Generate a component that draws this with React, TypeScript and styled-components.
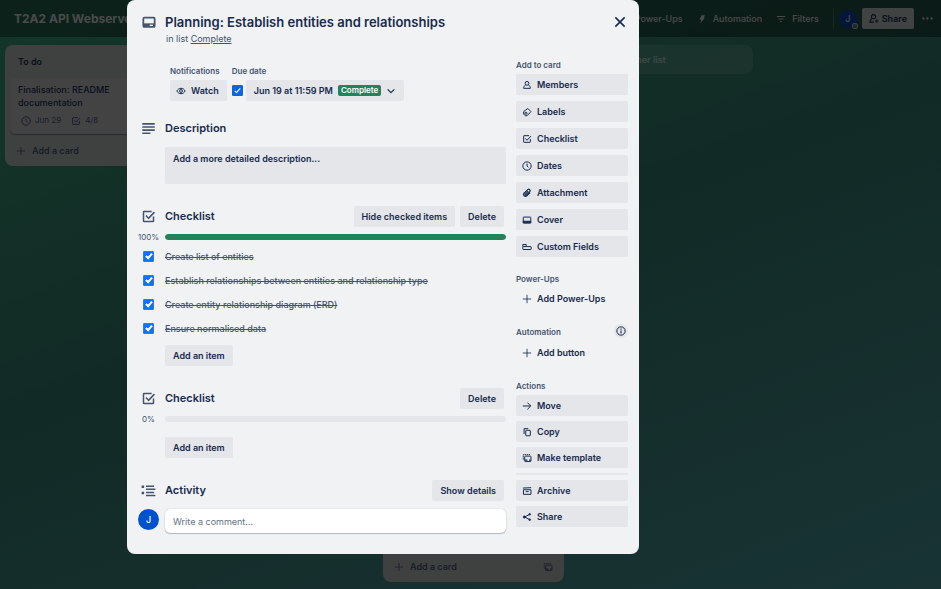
import React, { useState } from "react";
import type { ReactNode } from "react";
import styled, { createGlobalStyle } from "styled-components";

const ink = "#172b4d";
const subtle = "#44546f";
const fill = "#e4e6ea";

const GlobalStyle = createGlobalStyle`
  *, *::before, *::after { box-sizing: border-box; }
  body {
    margin: 0;
    background: #000;
    color: ${ink};
    font-family: Inter, "Liberation Sans", sans-serif;
    font-size: 9px;
    line-height: 13px;
  }
  button, input, textarea { font: inherit; color: inherit; }
  h1, h2, h3, p, ul { margin: 0; padding: 0; }
  ul { list-style: none; }
`;

/* ---------- icons ---------- */

const Svg = styled.svg<{ $size: number }>`
  display: block;
  flex: none;
  width: ${(p) => p.$size}px;
  height: ${(p) => p.$size}px;
  fill: none;
  stroke: currentColor;
  stroke-width: 2.4;
  stroke-linejoin: round;
`;

type IconName =
  | "card" | "lines" | "check" | "activity" | "eye" | "chevron" | "close"
  | "member" | "label" | "clock" | "clip" | "cover" | "fields" | "plus"
  | "info" | "arrow" | "copy" | "template" | "archive" | "share" | "bolt"
  | "filter" | "invite" | "dots";

const shapes: Record<IconName, ReactNode> = {
  card: (
    <>
      <rect x="3.500" y="4" width="17" height="14" rx="1.5" strokeWidth="2.600" />
      <path d="M4 12.500h16V18H4z" fill="currentColor" stroke="none" />
      <path d="M13 15.500h5" stroke="#f1f2f4" strokeWidth="2" />
    </>
  ),
  lines: <path d="M2 4.500h20M2 9.500h20M2 14.500h20M2 19.500h13" strokeWidth="2.600" />,
  check: (
    <>
      <path d="M17 4H5a1 1 0 0 0-1 1v14a1 1 0 0 0 1 1h14a1 1 0 0 0 1-1v-7" />
      <path d="M8 10.500l4 4.500 9.500-10" />
    </>
  ),
  activity: (
    <>
      <path d="M8 5h13M8 10h15M8 15h13M8 20h15" />
      <path d="M1 6h4M1 16h4" strokeWidth="4" />
    </>
  ),
  eye: (
    <>
      <path d="M2 12c2.500-4.500 6-6.500 10-6.500s7.500 2 10 6.500c-2.500 4.500-6 6.500-10 6.500S4.500 16.500 2 12z" />
      <circle cx="12" cy="12" r="3.500" />
    </>
  ),
  chevron: <path d="M4 8l8 8 8-8" strokeWidth="3" />,
  close: <path d="M5 5l14 14M19 5L5 19" strokeWidth="2.400" />,
  member: (
    <>
      <circle cx="12" cy="8" r="4.500" />
      <path d="M8.500 12C5.500 13.500 4 16 4 20h16c0-4-1.500-6.500-4.500-8" />
    </>
  ),
  label: (
    <>
      <path d="M4 11v6l4 4h4l9.500-10L14 3.500z" />
      <circle cx="9.500" cy="15" r="2.500" />
    </>
  ),
  clock: (
    <>
      <circle cx="12" cy="12" r="10" />
      <path d="M12 6v6l3.500 3" />
    </>
  ),
  clip: (
    <path d="M19.500 11l-8 8a4.500 4.500 0 0 1-6.400-6.400l8.600-8.600a3.400 3.400 0 0 1 4.800 4.800l-8.200 8.200a1.700 1.700 0 0 1-2.400-2.400l7-7" strokeWidth="2.800" />
  ),
  cover: (
    <>
      <rect x="3" y="5" width="18" height="14" rx="1" />
      <path d="M3 15h18v4H3z" fill="currentColor" />
    </>
  ),
  fields: (
    <>
      <path d="M2 11V6h8v4" />
      <rect x="2" y="11" width="20" height="7" rx="1" />
    </>
  ),
  plus: <path d="M12 2v20M2 12h20" strokeWidth="2" />,
  info: (
    <>
      <circle cx="12" cy="12" r="10" />
      <path d="M12 11v7M12 6v3" strokeWidth="2.600" />
    </>
  ),
  arrow: <path d="M2 12h19M13 4l8 8-8 8" />,
  copy: (
    <>
      <path d="M5 17V4h10" />
      <rect x="9" y="8" width="11" height="13" rx="1" />
    </>
  ),
  template: (
    <>
      <path d="M3 16V4h16" strokeDasharray="3.500 1.500" />
      <rect x="6.500" y="7.500" width="15" height="13" rx="1.500" />
      <path d="M7 17h6M17 17h4" strokeWidth="3" />
    </>
  ),
  archive: (
    <>
      <path d="M2 5l20-1" />
      <path d="M3.500 9h18v11h-18zM9 13.500h7" />
    </>
  ),
  share: (
    <>
      <path d="M19 5.500L6 12l13 6.500" />
      <circle cx="5.500" cy="12" r="2.500" fill="currentColor" />
      <circle cx="18.500" cy="5.500" r="2" />
      <circle cx="18.500" cy="18.500" r="2" />
    </>
  ),
  bolt: <path d="M11 3h8l-3 6h3L8 22l2-8H6z" fill="currentColor" stroke="none" />,
  filter: <path d="M2 6h20M6 12h12M10 18h4" strokeWidth="2.400" />,
  invite: (
    <>
      <circle cx="12" cy="8" r="4.500" />
      <path d="M9 12c-3 1.500-5 4-5 8h9M19 14v7M15.500 17.500h7" />
    </>
  ),
  dots: (
    <g fill="currentColor" stroke="none">
      <circle cx="3" cy="12" r="2.500" />
      <circle cx="12" cy="12" r="2.500" />
      <circle cx="21" cy="12" r="2.500" />
    </g>
  ),
};

const Icon = ({ name, size = 10 }: { name: IconName; size?: number }) => (
  <Svg $size={size} viewBox="0 0 24 24" aria-hidden="true">
    {shapes[name]}
  </Svg>
);

/* ---------- board ---------- */

const Page = styled.div`
  display: flex;
  flex-direction: column;
  min-height: 100vh;
  background: linear-gradient(160deg, #389873 0%, #327568 45%, #458f92 100%);
`;

const BoardHeader = styled.header`
  display: flex;
  align-items: center;
  justify-content: space-between;
  height: 37px;
  padding: 0 8px 0 14px;
  background: rgba(0, 0, 0, 0.38);
  color: #c9cecc;
`;

const BoardTitle = styled.h1`
  font-size: 12px;
  line-height: 16px;
  font-weight: 700;
  white-space: nowrap;
`;

const HeaderTools = styled.div`
  display: flex;
  align-items: center;
  gap: 14px;
`;

const HeaderButton = styled.button`
  display: flex;
  align-items: center;
  gap: 6px;
  padding: 0;
  border: 0;
  background: none;
  font-weight: 500;
  cursor: pointer;
`;

const HeaderEnd = styled.div`
  display: flex;
  align-items: center;
  gap: 5px;
  padding-left: 5px;
  border-left: 1px solid rgba(255, 255, 255, 0.16);
`;

const ShareButton = styled.button`
  display: flex;
  align-items: center;
  gap: 3px;
  height: 21px;
  margin-right: 3px;
  padding: 0 7px 0 6px;
  border: 0;
  border-radius: 2px;
  background: #b4b7b8;
  color: ${ink};
  font-weight: 600;
`;

const Avatar = styled.span<{ $size: number }>`
  position: relative;
  display: grid;
  place-items: center;
  flex: none;
  width: ${(p) => p.$size}px;
  height: ${(p) => p.$size}px;
  border-radius: 50%;
  background: #0052cc;
  color: #fff;
  font-weight: 500;
`;

const BoardAvatar = styled(Avatar)`
  background: #0d41a0;
  color: #c9cecc;
`;

const AvatarBadge = styled.i`
  position: absolute;
  right: -1px;
  bottom: -1px;
  width: 6px;
  height: 6px;
  border: 1px solid #a9b4c4;
  border-radius: 2px;
  background: #5c6c85;
`;

const Lists = styled.main`
  display: flex;
  flex: 1;
  align-items: flex-start;
  gap: 8px;
  padding: 8px 5px 7px;
`;

const List = styled.section<{ $tall?: boolean }>`
  display: flex;
  flex: 0 0 181px;
  flex-direction: column;
  justify-content: ${(p) => (p.$tall ? "flex-end" : "flex-start")};
  align-self: ${(p) => (p.$tall ? "stretch" : "flex-start")};
  gap: 6px;
  padding: 8px 5px 5px;
  border-radius: 8px;
  background: #b0b2b1;
`;

const ListTitle = styled.h2`
  padding: 2px 8px 4px;
  font-size: 9px;
  line-height: 13px;
  font-weight: 600;
`;

const Card = styled.article`
  padding: 5px 8px 7px;
  border-radius: 5px;
  background: #b9bbba;
  box-shadow: 0 1px 1px rgba(9, 30, 66, 0.4);
`;

const CardText = styled.p`
  font-weight: 500;
`;

const CardBadges = styled.div`
  display: flex;
  gap: 10px;
  padding: 5px 3px 0;
  color: ${subtle};
  font-size: 8px;
`;

const Badge = styled.span`
  display: flex;
  align-items: center;
  gap: 4px;
`;

const ListFooter = styled.div`
  display: flex;
  align-items: center;
  justify-content: space-between;
  height: 21px;
  padding: 0 6px;
  color: ${subtle};
`;

const AddCard = styled.button`
  display: flex;
  align-items: center;
  gap: 6px;
  padding: 0;
  border: 0;
  background: none;
  font-weight: 600;
`;

const AddList = styled.button`
  display: flex;
  flex: 0 0 181px;
  align-items: center;
  gap: 6px;
  height: 29px;
  padding: 0 9px;
  border: 0;
  border-radius: 8px;
  background: rgba(255, 255, 255, 0.12);
  color: rgba(255, 255, 255, 0.55);
  font-weight: 600;
`;

/* ---------- dialog ---------- */

const Overlay = styled.div`
  position: fixed;
  inset: 0;
  overflow: auto;
  padding: 0 0 35px 127px;
  background: rgba(0, 0, 0, 0.64);
`;

const Dialog = styled.div`
  width: 100%;
  max-width: 512px;
  padding: 14px 11px 21px 10px;
  border-radius: 8px;
  background: #f1f2f4;
`;

const DialogHeader = styled.header`
  display: flex;
  align-items: flex-start;
  gap: 5px;
`;

const Gutter = styled.div`
  display: grid;
  place-items: center;
  flex: 0 0 23px;
  color: ${subtle};
`;

const TitleGutter = styled(Gutter)`
  height: 17px;
`;

const Titles = styled.div`
  flex: 1;
`;

const DialogTitle = styled.h2`
  font-size: 13px;
  line-height: 17px;
  font-weight: 600;
`;

const InList = styled.p`
  padding: 1px 0 1px 1px;
  color: ${subtle};

  a { color: inherit; }
`;

const CloseButton = styled.button`
  display: grid;
  place-items: center;
  width: 16px;
  height: 10px;
  padding: 0;
  border: 0;
  background: none;
  color: ${ink};
`;

const Columns = styled.div`
  display: flex;
  gap: 10px;
  padding-top: 13px;
`;

const MainColumn = styled.div`
  flex: 1;
  min-width: 0;
`;

const Facts = styled.div`
  display: flex;
  gap: 5px;
  padding: 6px 0 0 33px;
`;

const SmallLabel = styled.h3`
  color: ${subtle};
  font-size: 8px;
  line-height: 12px;
  font-weight: 600;
`;

const FactRow = styled.div`
  display: flex;
  align-items: center;
  gap: 3px;
  padding-top: 3px;
`;

const Button = styled.button`
  display: inline-flex;
  align-items: center;
  gap: 5px;
  height: 21px;
  padding: 0 8px;
  border: 0;
  border-radius: 2px;
  background: ${fill};
  color: ${ink};
  font-weight: 600;
  white-space: nowrap;
  cursor: pointer;
`;

const WatchButton = styled(Button)`
  padding: 0 8px 0 6px;
`;

const DoneTag = styled.span`
  padding: 0 3px;
  border-radius: 2px;
  background: #1f845a;
  color: #fff;
  font-size: 8px;
  line-height: 11px;
`;

const Tick = styled.input`
  display: grid;
  place-items: center;
  flex: none;
  width: 11px;
  height: 11px;
  margin: 0;
  border: 1px solid #8590a2;
  border-radius: 1px;
  background: #fff;
  appearance: none;

  &:checked {
    border-color: #3d78c4;
    background: #0075ff;
  }

  &:checked::after {
    content: "";
    width: 4px;
    height: 7px;
    margin-bottom: 2px;
    border: solid #fff;
    border-width: 0 2px 2px 0;
    transform: rotate(42deg);
  }
`;

const DueTick = styled(Tick)`
  &:checked {
    border-color: #0c66e4;
    background: #0c66e4;
  }

  &:checked::after {
    width: 3px;
    height: 6px;
    border-width: 0 1px 1px 0;
  }
`;

const Section = styled.section<{ $top: number }>`
  padding-top: ${(p) => p.$top}px;
`;

const Row = styled.div<{ $height: number }>`
  display: flex;
  align-items: center;
  gap: 5px;
  min-height: ${(p) => p.$height}px;
`;

const ProgressRow = styled(Row)`
  padding-top: 3px;
`;

const SectionTitle = styled.h3`
  flex: 1;
  font-size: 11px;
  line-height: 15px;
  font-weight: 600;
`;

const HeadButtons = styled.div`
  display: flex;
  gap: 5px;
  padding-right: 2px;
`;

const Indent = styled.div<{ $top: number }>`
  padding: ${(p) => p.$top}px 0 0 28px;
`;

const DescriptionButton = styled(Button)`
  display: flex;
  align-items: flex-start;
  width: 100%;
  height: auto;
  min-height: 37px;
  padding-top: 5px;
`;

const Percent = styled.span`
  font-size: 8px;
  line-height: 12px;
`;

const Progress = styled.div`
  flex: 1;
  height: 6px;
  overflow: hidden;
  border-radius: 3px;
  background: ${fill};
`;

const ProgressFill = styled.div`
  height: 100%;
  border-radius: 3px;
  background: #1f845a;
`;

const ItemLabel = styled.label<{ $done: boolean }>`
  color: ${(p) => (p.$done ? subtle : ink)};
  font-weight: 500;
  text-decoration: ${(p) => (p.$done ? "line-through" : "none")};
`;

const CommentRow = styled(Row)`
  align-items: flex-start;
  margin-top: 8px;
`;

const CommentInput = styled.input`
  flex: 1;
  min-width: 0;
  height: 24px;
  padding: 0 8px;
  border: 0;
  border-radius: 5px;
  background: #fff;
  box-shadow: 0 1px 1px rgba(9, 30, 66, 0.25), 0 0 1px rgba(9, 30, 66, 0.31);

  &::placeholder { color: #626f86; opacity: 1; }
`;

const Sidebar = styled.aside`
  flex: 0 0 112px;
`;

const SideGroup = styled.section<{ $top: number; $gap?: number }>`
  display: flex;
  flex-direction: column;
  gap: ${(p) => p.$gap ?? 6}px;
  padding-top: ${(p) => p.$top}px;

  ${SmallLabel} + * { margin-top: ${(p) => 3 - (p.$gap ?? 6)}px; }
`;

const SideButton = styled(Button)<{ $plain?: boolean }>`
  width: 100%;
  padding: 0 6px;
  background: ${(p) => (p.$plain ? "transparent" : fill)};
`;

const SideHead = styled.div`
  display: flex;
  justify-content: space-between;
  align-items: center;
`;

const InfoButton = styled.button`
  display: grid;
  place-items: center;
  width: 14px;
  height: 14px;
  padding: 0;
  border: 0;
  border-radius: 50%;
  background: ${fill};
`;

const Divider = styled.hr`
  width: 100%;
  height: 2px;
  margin: 0;
  border: 0;
  background: ${fill};
`;

const addActions: [IconName, string][] = [
  ["member", "Members"],
  ["label", "Labels"],
  ["check", "Checklist"],
  ["clock", "Dates"],
  ["clip", "Attachment"],
  ["cover", "Cover"],
  ["fields", "Custom Fields"],
];

const cardActions: [IconName, string][] = [
  ["arrow", "Move"],
  ["copy", "Copy"],
  ["template", "Make template"],
];

const endActions: [IconName, string][] = [
  ["archive", "Archive"],
  ["share", "Share"],
];

const tasks = [
  "Create list of entities",
  "Establish relationships between entities and relationship type",
  "Create entity relationship diagram (ERD)",
  "Ensure normalised data",
];

const SideButtons = ({ items }: { items: [IconName, string][] }) => (
  <>
    {items.map(([icon, text]) => (
      <SideButton key={text} type="button">
        <Icon name={icon} /> {text}
      </SideButton>
    ))}
  </>
);

const Checklist = ({ items, top }: { items: string[]; top: number }) => {
  const [done, setDone] = useState(items.map(() => true));
  const percent = items.length
    ? Math.round((done.filter(Boolean).length / items.length) * 100)
    : 0;
  return (
    <Section $top={top}>
      <Row $height={21}>
        <Gutter><Icon name="check" size={15} /></Gutter>
        <SectionTitle>Checklist</SectionTitle>
        <HeadButtons>
          {items.length > 0 && <Button type="button">Hide checked items</Button>}
          <Button type="button">Delete</Button>
        </HeadButtons>
      </Row>
      <ProgressRow $height={17}>
        <Gutter><Percent>{percent}%</Percent></Gutter>
        <Progress>
          <ProgressFill style={{ width: `${percent}%` }} />
        </Progress>
      </ProgressRow>
      {items.map((item, i) => (
        <Row $height={24} key={item}>
          <Gutter>
            <Tick
              id={`task-${i}`}
              type="checkbox"
              checked={done[i]}
              onChange={() => setDone(done.map((d, j) => (j === i ? !d : d)))}
            />
          </Gutter>
          <ItemLabel htmlFor={`task-${i}`} $done={done[i]}>{item}</ItemLabel>
        </Row>
      ))}
      <Indent $top={items.length ? 5 : 11}>
        <Button type="button">Add an item</Button>
      </Indent>
    </Section>
  );
};

export default function App() {
  return (
    <>
      <GlobalStyle />
      <Page>
        <BoardHeader>
          <BoardTitle>T2A2 API Webserver</BoardTitle>
          <HeaderTools>
            <HeaderButton type="button">Power-Ups</HeaderButton>
            <HeaderButton type="button"><Icon name="bolt" /> Automation</HeaderButton>
            <HeaderButton type="button"><Icon name="filter" /> Filters</HeaderButton>
            <HeaderEnd>
              <BoardAvatar $size={18}>J<AvatarBadge /></BoardAvatar>
              <ShareButton type="button"><Icon name="invite" size={11} /> Share</ShareButton>
              <HeaderButton type="button" aria-label="Menu"><Icon name="dots" size={11} /></HeaderButton>
            </HeaderEnd>
          </HeaderTools>
        </BoardHeader>
        <Lists>
          <List>
            <ListTitle>To do</ListTitle>
            <Card>
              <CardText>Finalisation: README documentation</CardText>
              <CardBadges>
                <Badge><Icon name="clock" /> Jun 29</Badge>
                <Badge><Icon name="check" /> 4/8</Badge>
              </CardBadges>
            </Card>
            <ListFooter>
              <AddCard type="button"><Icon name="plus" /> Add a card</AddCard>
            </ListFooter>
          </List>
          <List />
          <List $tall>
            <ListFooter>
              <AddCard type="button"><Icon name="plus" /> Add a card</AddCard>
              <Icon name="template" />
            </ListFooter>
          </List>
          <AddList type="button"><Icon name="plus" /> Add another list</AddList>
        </Lists>
      </Page>

      <Overlay>
        <Dialog role="dialog" aria-modal="true" aria-labelledby="card-title">
          <DialogHeader>
            <TitleGutter><Icon name="card" size={16} /></TitleGutter>
            <Titles>
              <DialogTitle id="card-title">Planning: Establish entities and relationships</DialogTitle>
              <InList>in list <a href="#complete">Complete</a></InList>
            </Titles>
            <CloseButton type="button" aria-label="Close"><Icon name="close" size={16} /></CloseButton>
          </DialogHeader>

          <Columns>
            <MainColumn>
              <Facts>
                <div>
                  <SmallLabel>Notifications</SmallLabel>
                  <FactRow>
                    <WatchButton type="button"><Icon name="eye" /> Watch</WatchButton>
                  </FactRow>
                </div>
                <div>
                  <SmallLabel>Due date</SmallLabel>
                  <FactRow>
                    <DueTick type="checkbox" defaultChecked aria-label="Due date complete" />
                    <Button type="button">
                      Jun 19 at 11:59 PM <DoneTag>Complete</DoneTag>
                      <Icon name="chevron" />
                    </Button>
                  </FactRow>
                </div>
              </Facts>

              <Section $top={17}>
                <Row $height={21}>
                  <Gutter><Icon name="lines" size={15} /></Gutter>
                  <SectionTitle>Description</SectionTitle>
                </Row>
                <Indent $top={8}>
                  <DescriptionButton type="button">Add a more detailed description...</DescriptionButton>
                </Indent>
              </Section>

              <Checklist items={tasks} top={22} />
              <Checklist items={[]} top={22} />

              <Section $top={22}>
                <Row $height={21}>
                  <Gutter><Icon name="activity" size={15} /></Gutter>
                  <SectionTitle>Activity</SectionTitle>
                  <HeadButtons><Button type="button">Show details</Button></HeadButtons>
                </Row>
                <CommentRow $height={24}>
                  <Gutter><Avatar $size={21}>J</Avatar></Gutter>
                  <CommentInput aria-label="Write a comment" placeholder="Write a comment..." />
                </CommentRow>
              </Section>
            </MainColumn>

            <Sidebar>
              <SideGroup $top={0}>
                <SmallLabel>Add to card</SmallLabel>
                <SideButtons items={addActions} />
              </SideGroup>
              <SideGroup $top={16}>
                <SmallLabel>Power-Ups</SmallLabel>
                <SideButton $plain type="button"><Icon name="plus" /> Add Power-Ups</SideButton>
              </SideGroup>
              <SideGroup $top={16} $gap={4}>
                <SideHead>
                  <SmallLabel>Automation</SmallLabel>
                  <InfoButton type="button" aria-label="About automation"><Icon name="info" /></InfoButton>
                </SideHead>
                <SideButton $plain type="button"><Icon name="plus" /> Add button</SideButton>
              </SideGroup>
              <SideGroup $top={17} $gap={5}>
                <SmallLabel>Actions</SmallLabel>
                <SideButtons items={cardActions} />
                <Divider />
                <SideButtons items={endActions} />
              </SideGroup>
            </Sidebar>
          </Columns>
        </Dialog>
      </Overlay>
    </>
  );
}
